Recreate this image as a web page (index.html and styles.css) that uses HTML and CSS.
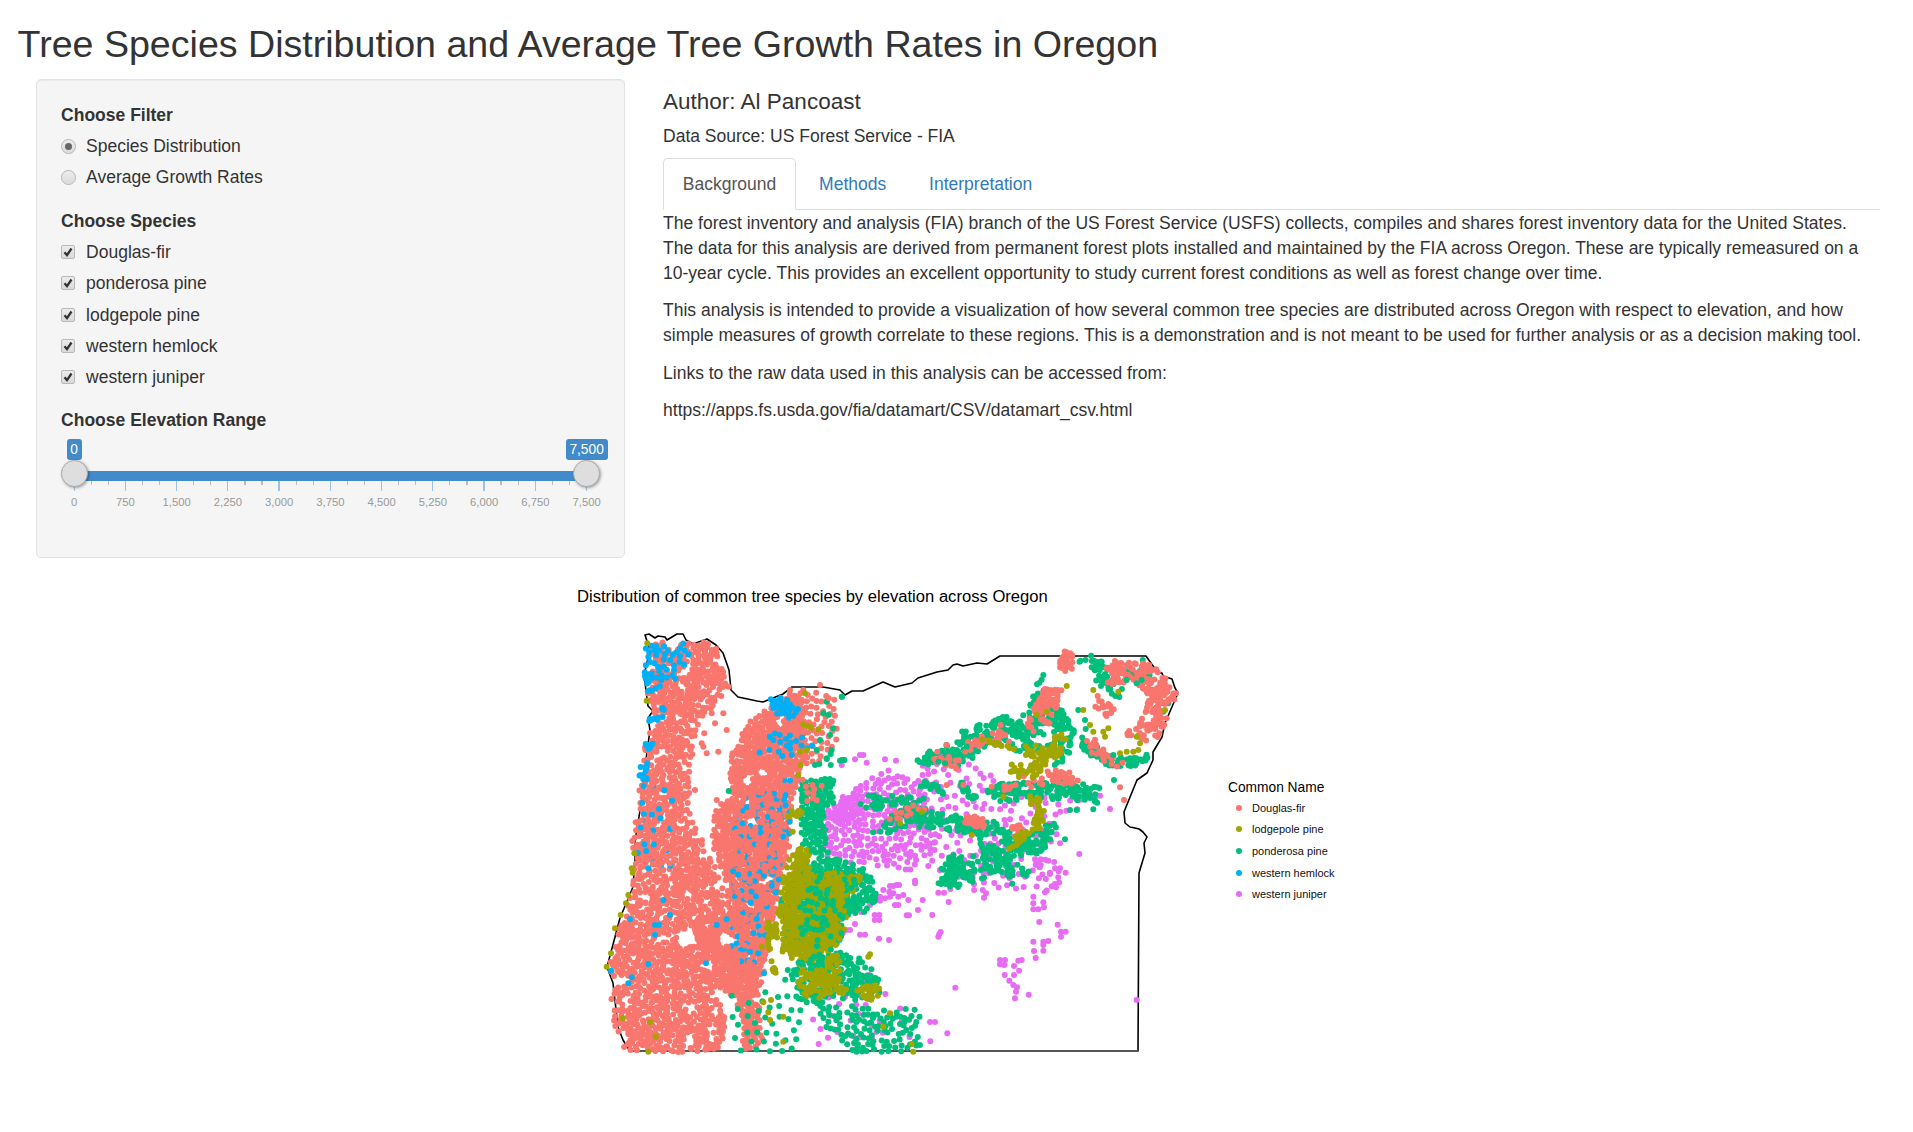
FILE: index.html
```html
<!DOCTYPE html>
<html lang="en">
<head>
<meta charset="utf-8">
<title>Tree Species Distribution and Average Tree Growth Rates in Oregon</title>
<link rel="stylesheet" href="styles.css">
</head>
<body>
<div class="page">
  <h2 class="page-title">Tree Species Distribution and Average Tree Growth Rates in Oregon</h2>
  <div class="layout">
    <aside class="well">
      <div class="group">
        <div class="group-label">Choose Filter</div>
        <div class="options">
          <div class="option"><span class="radio radio-on"></span>Species Distribution</div>
          <div class="option"><span class="radio"></span>Average Growth Rates</div>
        </div>
      </div>
      <div class="group">
        <div class="group-label">Choose Species</div>
        <div class="options">
          <div class="option"><span class="check"><svg viewBox="0 0 12 12"><path d="M2.5 6.2 5 9.2 9.5 2.5"/></svg></span>Douglas-fir</div>
          <div class="option"><span class="check"><svg viewBox="0 0 12 12"><path d="M2.5 6.2 5 9.2 9.5 2.5"/></svg></span>ponderosa pine</div>
          <div class="option"><span class="check"><svg viewBox="0 0 12 12"><path d="M2.5 6.2 5 9.2 9.5 2.5"/></svg></span>lodgepole pine</div>
          <div class="option"><span class="check"><svg viewBox="0 0 12 12"><path d="M2.5 6.2 5 9.2 9.5 2.5"/></svg></span>western hemlock</div>
          <div class="option"><span class="check"><svg viewBox="0 0 12 12"><path d="M2.5 6.2 5 9.2 9.5 2.5"/></svg></span>western juniper</div>
        </div>
      </div>
      <div class="group group-last">
        <div class="group-label">Choose Elevation Range</div>
        <div class="slider">
          <div class="badges">
            <div class="anchor"><span class="badge">0</span></div>
            <div class="anchor"><span class="badge">7,500</span></div>
          </div>
          <div class="track">
            <span class="handle handle-left"></span>
            <span class="handle handle-right"></span>
          </div>
          <div class="ticks" id="ticks"></div>
          <div class="tick-labels">
            <div class="anchor"><span>0</span></div>
            <div class="anchor"><span>750</span></div>
            <div class="anchor"><span>1,500</span></div>
            <div class="anchor"><span>2,250</span></div>
            <div class="anchor"><span>3,000</span></div>
            <div class="anchor"><span>3,750</span></div>
            <div class="anchor"><span>4,500</span></div>
            <div class="anchor"><span>5,250</span></div>
            <div class="anchor"><span>6,000</span></div>
            <div class="anchor"><span>6,750</span></div>
            <div class="anchor"><span>7,500</span></div>
          </div>
        </div>
      </div>
    </aside>
    <main class="main">
      <h4 class="author">Author: Al Pancoast</h4>
      <h5 class="source">Data Source: US Forest Service - FIA</h5>
      <ul class="tabs">
        <li class="tab tab-active">Background</li>
        <li class="tab">Methods</li>
        <li class="tab">Interpretation</li>
      </ul>
      <div class="tab-body">
        <p>The forest inventory and analysis (FIA) branch of the US Forest Service (USFS) collects, compiles and shares forest inventory data for the United States. The data for this analysis are derived from permanent forest plots installed and maintained by the FIA across Oregon. These are typically remeasured on a 10-year cycle. This provides an excellent opportunity to study current forest conditions as well as forest change over time.</p>
        <p>This analysis is intended to provide a visualization of how several common tree species are distributed across Oregon with respect to elevation, and how simple measures of growth correlate to these regions. This is a demonstration and is not meant to be used for further analysis or as a decision making tool.</p>
        <p>Links to the raw data used in this analysis can be accessed from:</p>
        <p>https://apps.fs.usda.gov/fia/datamart/CSV/datamart_csv.html</p>
      </div>
    </main>
  </div>
</div>
<svg class="plot" viewBox="0 570 1913 520" width="1913" height="520" xmlns="http://www.w3.org/2000/svg">
  <text class="plot-title" x="577" y="602">Distribution of common tree species by elevation across Oregon</text>
  <path class="state" id="state" d=""/>
  <path class="state-south" d="M630 1051H1138"/>
  <g id="points"></g>
  <text class="legend-title" x="1228" y="792">Common Name</text>
  <circle class="p-fir" cx="1239" cy="808" r="3"/>
  <text class="legend-label" x="1252" y="812">Douglas-fir</text>
  <circle class="p-lod" cx="1239" cy="829" r="3"/>
  <text class="legend-label" x="1252" y="833">lodgepole pine</text>
  <circle class="p-pon" cx="1239" cy="851" r="3"/>
  <text class="legend-label" x="1252" y="855">ponderosa pine</text>
  <circle class="p-hem" cx="1239" cy="873" r="3"/>
  <text class="legend-label" x="1252" y="877">western hemlock</text>
  <circle class="p-jun" cx="1239" cy="894" r="3"/>
  <text class="legend-label" x="1252" y="898">western juniper</text>
</svg>
<script src="map.js"></script>
</body>
</html>
```
FILE: styles.css
```css
* { box-sizing: border-box; }
html, body { margin: 0; padding: 0; background: #fff; }
body {
  font-family: "Liberation Sans", Arial, sans-serif;
  font-size: 17.5px;
  line-height: 25px;
  color: #333;
  overflow: hidden;
}
.page { padding: 0 33px 0 17.6px; }
.page-title {
  margin: 24px 0 13.5px;
  font-size: 37.6px;
  line-height: 41px;
  font-weight: 400;
}
.layout { display: flex; align-items: flex-start; }
.well {
  flex: 0 0 589px;
  margin-left: 18.75px;
  padding: 23.5px 23.75px 0;
  height: 479px;
  background: #f5f5f5;
  border: 1px solid #e3e3e3;
  border-radius: 5px;
  box-shadow: inset 0 1px 1px rgba(0,0,0,.05);
}
.group { margin-bottom: 18.75px; }
.group + .group-last { margin-top: -1px; }
.group-label { font-weight: 700; margin-bottom: 6px; }
.options { display: flex; flex-direction: column; gap: 6.25px; }
.option { display: flex; align-items: center; gap: 10px; height: 25px; }
.radio {
  width: 15px; height: 15px; border-radius: 50%;
  border: 1px solid #b4b4b4;
  background: linear-gradient(#ececec, #dadada);
  box-shadow: inset 0 0 1px #fff;
  display: flex; align-items: center; justify-content: center;
}
.radio-on::after {
  content: ""; width: 7.5px; height: 7.5px; border-radius: 50%; background: #666;
}
.check {
  width: 14px; height: 14px; border-radius: 2px;
  border: 1px solid #b8b8b8;
  background: linear-gradient(#ececec, #dadada);
  margin: -1px 1px 0 0;
  display: block;
}
.check svg { display: block; width: 12px; height: 12px; }
.check path { fill: none; stroke: #333; stroke-width: 2.3; }
.slider { padding: 0 14px 0 13px; }
.badges { display: flex; justify-content: space-between; height: 21px; }
.anchor { width: 0; display: flex; justify-content: center; white-space: nowrap; }
.badge {
  flex: none;
  height: 21px; line-height: 21px;
  padding: 0 3.75px;
  font-size: 13.75px;
  color: #fff;
  background: #428bca;
  border-radius: 3px;
}
.track { position: relative; height: 10px; margin-top: 11px; background: #428bca; }
.handle {
  position: absolute; top: -10.5px;
  width: 27px; height: 27px; border-radius: 50%;
  background: #dedede;
  border: 1px solid #aaa;
  box-shadow: 1px 1px 3px rgba(0,0,0,.35);
}
.handle-left { left: -13.5px; }
.handle-right { right: -13.5px; }
.ticks { display: flex; justify-content: space-between; align-items: flex-start; height: 10px; margin: 0 -0.6px; }
.tick { width: 1.25px; height: 4.5px; background: #bbb; }
.tick-major { height: 10px; background: #9dc1e0; }
.tick-labels {
  display: flex; justify-content: space-between;
  margin-top: 4px;
  font-size: 11.25px; line-height: 14px; color: #999;
}
.main { flex: 1; margin-left: 37.7px; min-width: 0; }
.author { margin: 11.3px 0 12px; font-size: 22.5px; line-height: 24.75px; font-weight: 400; }
.source { margin: 0 0 12.5px; font-size: 17.5px; line-height: 19.25px; font-weight: 400; }
.tabs {
  display: flex; gap: 3.4px;
  list-style: none; margin: 0; padding: 0;
  border-bottom: 1px solid #ddd;
}
.tab {
  padding: 12.5px 18.75px;
  border: 1px solid transparent;
  border-radius: 5px 5px 0 0;
  margin-bottom: -1px;
  color: #337ab7;
}
.tab-active { color: #555; background: #fff; border-color: #ddd #ddd #fff; }
.tab-body { padding-top: 0.5px; }
.tab-body p { margin: 0 0 12.5px; }
.plot { display: block; margin-top: 12px; }
.plot-title { font-size: 16.63px; fill: #000; }
.legend-title { font-size: 13.75px; fill: #000; }
.legend-label { font-size: 11px; fill: #111; }
.state { fill: none; stroke: #000; stroke-width: 1.6; stroke-linejoin: round; }
.state-south { fill: none; stroke: #555; stroke-width: 2; }
.p-fir { fill: #F8766D; }
.p-lod { fill: #A3A500; }
.p-pon { fill: #00BF7D; }
.p-hem { fill: #00B0F6; }
.p-jun { fill: #E76BF3; }
```
FILE: map.js
```js
(function () {
  // slider ticks: 0..7500 with two minor ticks per 750 step
  var ticks = document.getElementById('ticks');
  for (var t = 0; t <= 30; t++) {
    var el = document.createElement('span');
    el.className = t % 3 === 0 ? 'tick tick-major' : 'tick';
    ticks.appendChild(el);
  }

  // state outline, page pixels
  var outline = [[645,635],[649,634],[655,638],[658,636],[665,637],[667,640],[677,634],[683,634],[686,640],[693,644],[707,639],[716,645],[723,653],[729,670],[731,690],[738,697],[757,701],[763,702],[783,694],[792,687],[823,687],[840,690],[845,695],[852,691],[863,691],[883,682],[895,687],[912,683],[918,678],[937,672],[948,670],[953,665],[957,664],[963,666],[977,663],[987,664],[1000,656],[1146,656],[1158,673],[1162,673],[1163,676],[1172,679],[1175,688],[1178,693],[1165,723],[1162,737],[1153,752],[1153,760],[1147,773],[1137,780],[1128,802],[1124,812],[1125,823],[1130,827],[1135,828],[1139,829],[1143,832],[1147,837],[1144,843],[1145,853],[1139,873],[1138,1051],[630,1051],[623,1040],[618,1027],[613,983],[607,967],[615,937],[620,918],[633,887],[635,860],[635,840],[637,830],[642,797],[645,767],[650,730],[648,718],[653,711],[648,706],[644,675],[650,650],[645,635]];
  document.getElementById('state').setAttribute('d', 'M' + outline.map(function (p) { return p.join(' '); }).join('L') + 'Z');

  // seeded random
  var seed = 20431;
  function rnd() {
    seed |= 0; seed = seed + 0x6D2B79F5 | 0;
    var x = Math.imul(seed ^ seed >>> 15, 1 | seed);
    x = x + Math.imul(x ^ x >>> 7, 61 | x) ^ x;
    return ((x ^ x >>> 14) >>> 0) / 4294967296;
  }

  // white flecks left between plots
  var flecks = [];
  for (var i = 0; i < 190; i++) flecks.push([600 + rnd() * 400, 630 + rnd() * 425, 3 + rnd() * rnd() * 6]);
  function inFleck(q) {
    return flecks.some(function (k) { var a = k[0] - q[0], b = k[1] - q[1]; return a * a + b * b < k[2] * k[2]; });
  }

  // frames: crops of the reference used to read positions
  var F = { a: [590,570], b: [800,630], c: [820,650], d: [600,840], e: [610,630] };
  function tr(f, pts) {
    var o = F[f];
    return pts.map(function (p) { return [o[0] + p[0] / 3, o[1] + p[1] / 3]; });
  }
  var layer = document.getElementById('points');
  var NS = 'http://www.w3.org/2000/svg';
  function put(x, y, c) {
    if (y > 1052) y = 1052 - rnd();
    var k = document.createElementNS(NS, 'circle');
    k.setAttribute('cx', x.toFixed(1));
    k.setAttribute('cy', y.toFixed(1));
    k.setAttribute('r', '3');
    k.setAttribute('class', 'p-' + c);
    layer.appendChild(k);
  }
  function inside(p, poly) {
    var hit = false;
    for (var i = 0, j = poly.length - 1; i < poly.length; j = i++) {
      if ((poly[i][1] > p[1]) !== (poly[j][1] > p[1]) &&
          p[0] < (poly[j][0] - poly[i][0]) * (p[1] - poly[i][1]) / (poly[j][1] - poly[i][1]) + poly[i][0]) hit = !hit;
    }
    return hit;
  }
  // o: {min: spacing, holes: polygons, jit: edge scatter, fleck: leave white flecks}
  function blob(c, f, pts, n, o) {
    o = o || {};
    var P = tr(f, pts), H = (o.holes || []).map(function (h) { return tr(f, h); });
    var xs = P.map(function (p) { return p[0]; }), ys = P.map(function (p) { return p[1]; });
    var x0 = Math.min.apply(0, xs), x1 = Math.max.apply(0, xs), y0 = Math.min.apply(0, ys), y1 = Math.max.apply(0, ys);
    var kept = [], d2 = (o.min || 0) * (o.min || 0), guard = 0, jit = o.jit === undefined ? 4 : o.jit;
    while (kept.length < n && guard++ < n * 40) {
      var q = [x0 + rnd() * (x1 - x0), y0 + rnd() * (y1 - y0)];
      if (!inside(q, P)) continue;
      q = [q[0] + (rnd() - 0.5) * jit * 2, q[1] + (rnd() - 0.5) * jit * 2];
      if (H.some(function (h) { return inside(q, h); })) continue;
      if (o.fleck && inFleck(q)) continue;
      if (d2 && kept.some(function (k) { var a = k[0] - q[0], b = k[1] - q[1]; return a * a + b * b < d2; })) continue;
      kept.push(q);
      put(q[0], q[1], c);
    }
  }
  function line(c, f, pts, w, n) {
    var P = tr(f, pts), len = [], tot = 0;
    n = Math.round(n * 1.2);
    for (var i = 1; i < P.length; i++) {
      var l = Math.hypot(P[i][0] - P[i-1][0], P[i][1] - P[i-1][1]);
      len.push(l); tot += l;
    }
    for (var m = 0; m < n; m++) {
      var s = rnd() * tot, seg = 0;
      while (seg < len.length - 1 && s > len[seg]) { s -= len[seg]; seg++; }
      var u = s / len[seg], a = P[seg], b = P[seg+1];
      var r = Math.sqrt(rnd()) * w / 4.5, th = rnd() * 6.283;
      put(a[0] + (b[0]-a[0])*u + Math.cos(th)*r, a[1] + (b[1]-a[1])*u + Math.sin(th)*r, c);
    }
  }
  function dots(c, f, pts) { tr(f, pts).forEach(function (p) { put(p[0], p[1], c); }); }

  var firWest = [[185,230],[350,215],[405,280],[405,350],[350,420],[318,470],[300,520],[290,620],[300,760],[330,810],[395,950],[415,1050],[330,1100],[350,1230],[400,1330],[410,1400],[380,1440],[120,1440],[78,1370],[72,1270],[65,1200],[100,1050],[135,950],[135,800],[160,650],[165,560],[190,480],[185,430]];
  var firEast = [[530,425],[620,375],[640,440],[635,570],[598,700],[585,850],[550,1010],[535,1060],[515,1200],[495,1280],[510,1420],[470,1430],[450,1280],[350,1225],[330,1100],[420,1040],[420,950],[375,830],[380,720],[430,680],[430,570],[470,480]];
  var firHoles = [[[255,1088],[310,1070],[325,1125],[270,1135]], [[272,1295],[320,1305],[305,1345]], [[325,480],[375,530],[380,820],[310,770],[300,620]]];
  var fo = { min: 3.1, holes: firHoles, jit: 4, fleck: true };
  var fo2 = { min: 2, holes: firHoles, jit: 3, fleck: true };

  blob('fir', 'a', firWest, 1350, fo);
  blob('fir', 'a', firEast, 1060, { min: 3.1, jit: 4, fleck: true });
  // hemlock under the second fir pass
  blob('hem', 'a', [[430,680],[600,620],[590,850],[540,1000],[500,1200],[420,1180],[430,900]], 105, { min: 5 });
  blob('hem', 'a', [[150,650],[280,650],[250,900],[130,900]], 22, { min: 6 });
  blob('fir', 'a', firWest, 330, fo2);
  blob('fir', 'a', firEast, 380, { min: 2, jit: 3, fleck: true });
  // north end of the Cascades, thinner
  blob('fir', 'a', [[620,370],[725,385],[730,520],[650,590],[630,500]], 80, { min: 5 });
  dots('fir', 'a', [[343,490],[340,530],[385,545],[365,430],[400,430],[410,480],[380,690],[385,740],[315,660],[375,460],[350,550],[335,520],[600,360],[640,360],[690,345]]);

  // hemlock on top
  blob('hem', 'e', [[110,40],[220,40],[235,70],[200,130],[150,170],[120,160],[105,100]], 42, { min: 4.2, fleck: true });
  line('hem', 'e', [[108,125],[125,180]], 25, 7);
  line('hem', 'e', [[110,270],[155,265]], 10, 6);
  line('hem', 'e', [[155,235],[160,240]], 10, 3);
  line('hem', 'e', [[100,350],[130,350]], 18, 9);
  line('hem', 'e', [[100,385],[100,465]], 20, 9);
  blob('hem', 'e', [[475,205],[520,200],[565,240],[550,262],[500,250]], 26, { min: 3, jit: 2 });
  blob('hem', 'e', [[450,320],[610,310],[590,370],[440,370]], 20, { min: 4 });
  dots('hem', 'd', [[190,180],[90,238],[165,255],[178,255],[165,285],[145,372],[318,370],[33,392],[95,412],[85,430],[560,165],[515,137],[528,157],[470,237],[492,400],[350,255],[380,238],[210,225],[450,335],[475,340]]);

  // juniper, central bands
  blob('jun', 'a', [[690,760],[800,650],[900,610],[1000,640],[1040,830],[960,900],[820,880],[720,860]], 250, { min: 4.4, jit: 3 });
  blob('jun', 'a', [[700,730],[800,670],[810,720],[760,760]], 30, { min: 3.6, jit: 2 });
  blob('jun', 'c', [[280,335],[340,320],[450,330],[560,400],[700,440],[840,435],[720,530],[690,610],[730,670],[700,720],[500,720],[350,730],[340,660]], 190, { min: 5, jit: 3 });
  dots('jun', 'c', [[120,315],[130,315],[105,328],[140,338],[195,328],[228,332],[65,345],[840,437],[828,437]]);
  dots('jun', 'b', [[466,1073],[442,1210],[390,1176],[405,1176],[391,1234],[645,1105],[686,1094],[651,1072],[648,1085],[640,1065],[628,1052],[614,1035],[642,1035],[657,1022],[642,1008],[655,992],[665,990],[600,990],[615,990],[600,1003],[613,1005],[1010,1110],[707,984],[702,963],[700,935],[730,962],[730,945],[730,935],[745,933],[783,920],[783,905],[797,905],[773,884],[718,876],[700,800],[735,787],[700,820],[730,817],[700,838],[715,838],[732,832],[765,762],[768,772],[750,728],[765,715],[780,715],[797,728],[707,705],[722,705],[745,692],[705,688],[722,688],[838,672],[780,640],[930,537],[418,912],[422,906],[415,920],[237,926],[267,930],[180,914],[195,914],[165,882],[128,910],[150,900],[138,900],[397,855],[354,840],[320,856],[327,856],[224,855],[238,855],[224,870],[238,870],[183,846],[446,816],[368,810],[415,788],[432,788],[552,803],[558,790],[548,780],[345,752],[345,760],[385,708],[210,825],[240,800],[240,812],[310,795],[325,810],[250,780],[270,768],[280,768],[290,765],[297,765],[268,785],[280,790],[295,800],[270,800],[285,825],[295,825],[255,805]]);
  blob('jun', 'a', [[770,1200],[900,1240],[1000,1420],[640,1440],[640,1330]], 34, { min: 6 });

  // ponderosa, central and northeast
  line('pon', 'c', [[300,340],[340,310],[420,320]], 30, 38);
  line('pon', 'c', [[400,320],[470,260],[560,240],[610,220],[700,230],[740,250]], 62, 155);
  line('pon', 'c', [[560,240],[620,290],[700,320],[740,280]], 55, 50);
  line('pon', 'c', [[670,95],[650,130],[640,170]], 22, 12);
  line('pon', 'c', [[690,180],[730,200],[720,240]], 25, 18);
  line('pon', 'c', [[520,430],[640,420],[760,420],[830,435]], 42, 120);
  line('pon', 'c', [[140,460],[220,450],[320,470]], 34, 50);
  line('pon', 'c', [[180,540],[260,500],[400,520],[520,540],[650,600]], 40, 150);
  line('pon', 'c', [[300,400],[340,410],[370,430]], 15, 14);
  blob('pon', 'c', [[390,620],[420,620],[415,710],[360,700]], 42, { min: 2.4, jit: 3 });
  line('pon', 'c', [[420,690],[520,620],[590,650],[600,690]], 60, 70);
  line('pon', 'c', [[560,590],[640,590],[690,540]], 45, 52);
  line('pon', 'c', [[500,580],[560,640]], 45, 28);
  line('pon', 'c', [[430,400],[440,440],[470,440]], 15, 12);
  line('pon', 'c', [[790,265],[800,290],[860,330],[920,340],[980,320]], 25, 62);
  line('pon', 'c', [[795,30],[850,50],[840,90],[900,130]], 34, 40);
  line('pon', 'c', [[930,70],[990,75]], 20, 16);
  dots('pon', 'c', [[820,478],[882,390],[750,480],[770,480],[735,568],[775,180],[795,210],[797,237],[670,75],[968,30],[1045,160],[1030,185],[1010,172],[1005,235],[65,140],[65,330],[72,330],[20,327],[32,312]]);
  dots('pon', 'e', [[696,200],[650,215],[640,250],[655,255],[670,295],[660,315],[630,330],[620,360],[665,360],[650,385],[690,392],[703,390],[662,405],[615,405],[628,402],[356,483]]);

  // Douglas-fir scattered through the blue mountains
  line('fir', 'c', [[740,20],[740,60]], 32, 28);
  line('fir', 'c', [[700,110],[690,150],[670,190],[650,215]], 50, 62);
  line('fir', 'c', [[880,70],[960,70],[1000,90],[1030,140],[1010,190],[990,240],[960,240],[935,235]], 58, 165);
  line('fir', 'c', [[830,150],[870,190]], 30, 14);
  line('fir', 'c', [[795,265],[850,320],[900,340]], 28, 22);
  line('fir', 'c', [[690,375],[765,390]], 30, 26);
  line('fir', 'c', [[440,510],[490,520]], 24, 25);
  line('fir', 'c', [[345,325],[420,345]], 24, 14);
  line('fir', 'c', [[530,410],[700,380]], 30, 14);
  line('fir', 'c', [[580,530],[620,540]], 20, 8);
  line('fir', 'c', [[430,290],[560,260]], 40, 22);
  line('fir', 'c', [[200,510],[300,470]], 30, 10);
  dots('fir', 'c', [[900,412],[912,450],[542,225],[380,285],[352,305],[26,145],[380,405],[430,405],[515,410]]);
  dots('pon', 'c', [[355,335],[375,340],[410,300],[440,290],[880,315],[930,325],[965,90],[950,100],[920,90]]);

  // ponderosa: north stem and Cascades crest
  blob('pon', 'a', [[640,650],[720,625],[722,690],[690,720],[700,840],[650,830],[640,740]], 115, { min: 3.2, jit: 5 });
  blob('fir', 'a', [[640,630],[700,660],[660,700]], 10, { min: 4, jit: 4 });
  blob('pon', 'a', [[690,860],[790,890],[850,945],[850,1000],[755,1040],[745,1120],[600,1130],[580,1000],[630,900]], 360, { min: 2.6, jit: 4 });
  // lodgepole: high desert block
  blob('lod', 'd', [[595,30],[625,40],[620,120],[660,110],[720,110],[800,115],[730,170],[720,290],[650,370],[560,350],[545,200],[565,100]], 400, { min: 2.4, jit: 5 });
  blob('pon', 'd', [[640,90],[720,90],[810,140],[725,170],[720,300],[640,330],[590,260]], 60, { min: 3, jit: 3 });
  line('lod', 'd', [[700,100],[720,170]], 25, 30);
  line('lod', 'd', [[600,30],[610,90]], 18, 18);
  line('lod', 'a', [[605,735],[635,735]], 20, 9);
  // south
  blob('pon', 'd', [[560,400],[640,350],[720,330],[800,370],[850,440],[800,470],[740,470],[600,480]], 170, { min: 2.8, jit: 5 });
  blob('lod', 'd', [[590,410],[700,380],[740,450],[620,465]], 60, { min: 3, jit: 5 });
  blob('lod', 'd', [[690,345],[720,350],[710,370],[680,370]], 10, { min: 2 });
  blob('lod', 'd', [[770,440],[840,430],[830,480],[790,475]], 24, { min: 1.8, jit: 2 });
  blob('pon', 'd', [[640,490],[880,520],[950,510],[950,625],[770,632],[700,590]], 115, { min: 3.6, jit: 4 });
  blob('pon', 'd', [[380,450],[600,470],[590,630],[410,630]], 38, { min: 9 });
  line('lod', 'd', [[510,250],[520,320]], 30, 20);
  line('lod', 'd', [[500,350],[530,400]], 12, 6);
  dots('lod', 'd', [[103,40],[95,85],[98,98],[85,165],[78,190],[62,225],[45,265],[33,340],[20,380],[68,535],[150,546],[167,590],[145,635],[485,320],[555,127],[513,480],[490,487],[505,517],[510,540],[550,530],[550,605],[935,612],[940,635],[810,343],[805,350],[870,520],[850,560]]);
  dots('lod', 'e', [[112,40],[110,212],[585,190],[580,283],[595,288],[603,293],[625,298],[570,365],[590,360],[572,405],[565,435],[555,555],[548,605]]);
  line('lod', 'c', [[620,300],[690,320],[720,270]], 40, 40);
  line('lod', 'c', [[575,350],[620,370],[660,350],[690,310]], 30, 32);
  line('lod', 'c', [[640,440],[660,490],[650,540]], 25, 32);
  line('lod', 'c', [[570,590],[620,545]], 20, 18);
  line('lod', 'c', [[480,265],[590,300]], 8, 9);
  dots('lod', 'c', [[820,120],[895,125],[740,108],[680,185],[650,195],[790,180],[810,225],[820,245],[850,245],[865,235],[855,260],[900,310],[920,305],[950,260],[960,280],[955,300],[940,305],[550,440],[240,520],[305,485],[455,555],[1035,180]]);
  dots('fir', 'b', [[1128,190]]);
})();
```
